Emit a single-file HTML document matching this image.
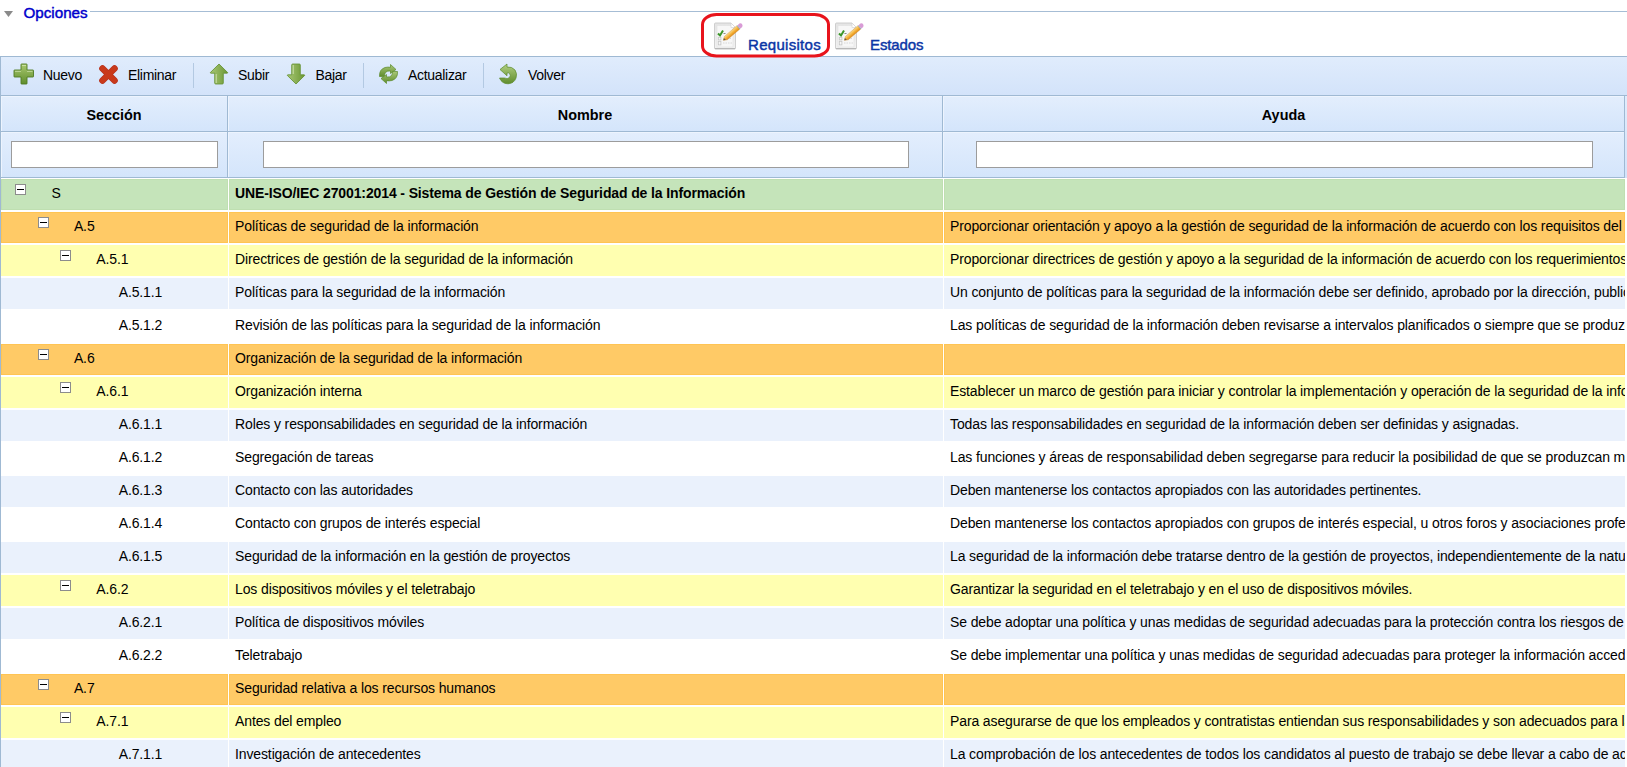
<!DOCTYPE html>
<html><head><meta charset="utf-8">
<style>
*{box-sizing:border-box}
html,body{margin:0;padding:0}
body{width:1627px;height:767px;overflow:hidden;position:relative;background:#fff;font-family:"Liberation Sans",sans-serif;color:#000}
.abs{position:absolute}
#fsline{position:absolute;left:90px;top:11px;width:1537px;height:1px;background:#a6bdd5}
#legend{position:absolute;left:23.5px;top:2px;font-size:15.2px;line-height:22px;color:#0000cc;-webkit-text-stroke:0.45px #0000cc}
.tabtxt{position:absolute;top:35px;font-size:15px;line-height:20px;color:#0a36a6;-webkit-text-stroke:0.45px #0a36a6}
#toolbar{position:absolute;z-index:3;left:0;top:56px;width:1627px;height:40px;border-top:1px solid #9fb9d3;border-bottom:1px solid #9fb9d3;border-left:1px solid #9fb9d3;background:linear-gradient(#e0ecfc,#d3e3fa)}
.tbt{position:absolute;top:9px;font-size:14px;line-height:18px;color:#000;letter-spacing:-0.3px}
.sep{position:absolute;top:6px;width:1px;height:25px;background:#b3c9e2}
.ico{position:absolute}
#hdr{position:absolute;left:0;top:95px;width:1627px;height:84px;background:linear-gradient(#e0ecfc,#d3e3fa)}
.hc{position:absolute;border:1px solid #9fb9d3;background:linear-gradient(#e3eefd,#d4e5fb);box-shadow:inset 1px 1px 0 #edf4fe}
.ht{position:absolute;top:10px;width:100%;text-align:center;font-weight:bold;font-size:14.4px;line-height:18px}
.inp{position:absolute;top:9px;height:27px;background:#fff;border:1px solid #9c9c9c}
.row{position:absolute;left:1px;width:1626px;height:31px}
.c{position:absolute;top:0;height:31px;overflow:hidden;white-space:nowrap}
.c1{left:0;width:227px}
.c2{left:228px;width:714px}
.c3{left:943px;width:681px}
.t{position:absolute;left:6px;top:-1px;font-size:14px;letter-spacing:-0.12px;line-height:31px;white-space:nowrap}
.c1 .t{left:auto}
.bold{font-weight:bold}
.mb{position:absolute;top:5px;width:11px;height:11px;border:1px solid #8c8c8c;background:#fff}
.mb:after{content:"";position:absolute;left:1px;top:4px;width:7px;height:1px;background:#000}
.g{}
.g .c{background:#c5e4ba;box-shadow:inset 0 0 0 1px #bfdfb1}
.o .c{background:#ffca66;box-shadow:inset 0 0 0 1px #ffc453}
.y .c{background:#ffffb0}
.b .c{background:#eaf1fc}
.w .c{background:#fff}
</style></head><body>
<svg class="abs" style="left:0;top:0" width="20" height="22"><path d="M4 11 L13 11 L8.5 17 Z" fill="#8a8a8a"/></svg>
<div id="legend">Opciones</div>
<div id="fsline"></div>


<div id="toolbar">
<svg class="ico" style="left:12px;top:6px" width="22" height="22" viewBox="0 0 22 22">
<defs><linearGradient id="plg" x1="0" y1="0" x2="0" y2="1"><stop offset="0" stop-color="#a9c86f"/><stop offset="1" stop-color="#5f8d2c"/></linearGradient></defs>
<path d="M8 1.5 Q8 1 8.5 1 L13.5 1 Q14 1 14 1.5 L14 7 L20 7 Q20.5 7 20.5 7.5 L20.5 13.5 Q20.5 14 20 14 L14 14 L14 20.5 Q14 21 13.5 21 L8.5 21 Q8 21 8 20.5 L8 14 L1.5 14 Q1 14 1 13.5 L1 7.5 Q1 7 1.5 7 L8 7 Z" fill="url(#plg)" stroke="#4f7a22" stroke-width="0.9"/>
<path d="M9 2.5 L13 2.5 M2 8.3 L8 8.3 M14 8.3 L19.5 8.3" stroke="#d8eab8" stroke-width="0.9" opacity="0.8"/>
</svg>
<div class="tbt" style="left:42px">Nuevo</div>
<svg class="ico" style="left:97px;top:7px" width="21" height="21" viewBox="0 0 21 21">
<defs><linearGradient id="xg" x1="0" y1="0" x2="0" y2="1" gradientUnits="userSpaceOnUse"><stop offset="0" stop-color="#f07b3c"/><stop offset="1" stop-color="#c9391a"/></linearGradient></defs>
<path d="M4.5 4.5 L16.5 16.5 M16.5 4.5 L4.5 16.5" stroke="#b8321c" stroke-width="6.6" stroke-linecap="round"/>
<path d="M4.5 4.5 L16.5 16.5 M16.5 4.5 L4.5 16.5" stroke="url(#xg)" stroke-width="5" stroke-linecap="round"/>
</svg>
<div class="tbt" style="left:127px">Eliminar</div>
<div class="sep" style="left:192px"></div>
<svg class="ico" style="left:208px;top:6px" width="20" height="22" viewBox="0 0 20 22">
<defs><linearGradient id="ug" x1="0" y1="0" x2="1" y2="0"><stop offset="0" stop-color="#a8c776"/><stop offset="1" stop-color="#6c9834"/></linearGradient></defs>
<path d="M10 1 L18.7 9.6 Q18.8 10.2 18 10.2 L14.3 10.2 L14.3 20 Q14.3 21 13.3 21 L6.7 21 Q5.7 21 5.7 20 L5.7 10.2 L2 10.2 Q1.2 10.2 1.3 9.6 Z" fill="url(#ug)" stroke="#628f2e" stroke-width="0.8" stroke-linejoin="round"/>
<path d="M7.2 11 L7.2 20" stroke="#d4e5b4" stroke-width="0.9"/>
</svg>
<div class="tbt" style="left:237px">Subir</div>
<svg class="ico" style="left:285px;top:6px" width="20" height="22" viewBox="0 0 20 22">
<defs><linearGradient id="dng" x1="0" y1="0" x2="1" y2="0"><stop offset="0" stop-color="#a8c776"/><stop offset="1" stop-color="#6c9834"/></linearGradient></defs>
<path d="M10 21 L18.7 12.4 Q18.8 11.8 18 11.8 L14.3 11.8 L14.3 2 Q14.3 1 13.3 1 L6.7 1 Q5.7 1 5.7 2 L5.7 11.8 L2 11.8 Q1.2 11.8 1.3 12.4 Z" fill="url(#dng)" stroke="#628f2e" stroke-width="0.8" stroke-linejoin="round"/>
<path d="M7.2 2 L7.2 11" stroke="#d4e5b4" stroke-width="0.9"/>
</svg>
<div class="tbt" style="left:314.5px">Bajar</div>
<div class="sep" style="left:362px"></div>
<svg class="ico" style="left:377px;top:6px" width="21" height="22" viewBox="0 0 21 22">
<defs><linearGradient id="rg" x1="0" y1="0" x2="0" y2="1"><stop offset="0" stop-color="#a9c878"/><stop offset="1" stop-color="#5f8c2c"/></linearGradient></defs>
<path d="M1.5 13.5 Q1 6.5 7 4.5 Q10 3.8 12.5 4.3 L12.5 1.5 L18 6.5 L12.5 10.5 L12.5 8 Q9 7.5 7.5 9.5 Q6.3 11 6.5 13.5 Z" fill="url(#rg)" stroke="#5a8a2a" stroke-width="0.7" stroke-linejoin="round"/>
<path d="M19.5 8.5 Q20 15.5 14 17.5 Q11 18.2 8.5 17.7 L8.5 20.5 L3 15.5 L8.5 11.5 L8.5 14 Q12 14.5 13.5 12.5 Q14.7 11 14.5 8.5 Z" fill="url(#rg)" stroke="#5a8a2a" stroke-width="0.7" stroke-linejoin="round"/>
</svg>
<div class="tbt" style="left:407px">Actualizar</div>
<div class="sep" style="left:482px"></div>
<svg class="ico" style="left:497px;top:6px" width="20" height="22" viewBox="0 0 20 22">
<defs><linearGradient id="vg" x1="0" y1="0" x2="0" y2="1"><stop offset="0" stop-color="#b2d083"/><stop offset="1" stop-color="#5f8c2c"/></linearGradient></defs>
<path d="M1.5 15 L6.5 15 Q9.5 16.5 11.5 14.5 Q13 12.5 11.5 10.5 Q10.5 9.5 9 10 L9 12.8 L2 6.5 L9 1 L9 4 Q14 3.5 17 7 Q19.5 10.5 18 15 Q16 20.5 10 20.8 Q4 20.8 1.5 15 Z" fill="url(#vg)" stroke="#5a8a2a" stroke-width="0.7" stroke-linejoin="round"/>
</svg>
<div class="tbt" style="left:527px">Volver</div>
</div>
<svg class="ico" style="left:712px;top:20px" width="32" height="32" viewBox="0 0 32 32">
<defs><linearGradient id="dg1" x1="0" y1="0" x2="0" y2="1"><stop offset="0" stop-color="#e4e4e4"/><stop offset="1" stop-color="#f2f2f2"/></linearGradient>
<linearGradient id="pg1" gradientUnits="userSpaceOnUse" x1="12.37" y1="16.48" x2="15.23" y2="19.82"><stop offset="0" stop-color="#fbd98a"/><stop offset="0.5" stop-color="#f5b43c"/><stop offset="1" stop-color="#e08a18"/></linearGradient></defs>
<path d="M2.5 4 Q2.5 3 3.5 3 L19 3 L23.5 7.5 L23.5 28 Q23.5 29 22.5 29 L3.5 29 Q2.5 29 2.5 28 Z" fill="url(#dg1)" stroke="#c9c9c9" stroke-width="0.9"/>
<path d="M3 28.6 L23 28.6" stroke="#b3b3b3" stroke-width="1"/>
<rect x="5" y="5.5" width="16" height="21.5" fill="#f7f7f7" stroke="#e0e0e0" stroke-width="0.6"/>
<path d="M19 3 L19 7.5 L23.5 7.5 Z" fill="#ffffff" stroke="#d0d0d0" stroke-width="0.6"/>
<path d="M6 13.5 L8 15.5 L11 10.5" fill="none" stroke="#3c962a" stroke-width="2"/>
<rect x="6.3" y="17.3" width="2.6" height="2.6" fill="none" stroke="#c4c4c4" stroke-width="0.8"/>
<rect x="6.3" y="21.3" width="2.6" height="3.6" fill="none" stroke="#c4c4c4" stroke-width="0.8"/>
<path d="M11.5 13.5 L13.5 13.5" stroke="#707070" stroke-width="0.8"/>
<path d="M15 18.5 L20 18.5 M11 23 L20 23" stroke="#c8c8c8" stroke-width="0.7" stroke-dasharray="1.5 1"/>
<path d="M11.3 20.3 L12.37 16.48 L24.77 5.83 L27.63 9.17 L15.23 19.82 Z" fill="url(#pg1)" stroke="#c98a2a" stroke-width="0.4"/>
<path d="M11.3 20.3 L11.95 17.9 L13.9 19.9 Z" fill="#6b5a48"/>
<path d="M24.77 5.83 L25.57 5.13 L28.43 8.47 L27.63 9.17 Z" fill="#8fa4b8"/>
<path d="M25.57 5.13 L27.37 3.58 Q28.9 2.6 30 3.9 Q31 5.3 30.23 6.92 L28.43 8.47 Z" fill="#d99bd6"/>
</svg>
<div class="tabtxt" style="left:748px;letter-spacing:0.3px">Requisitos</div>
<svg class="ico" style="left:833px;top:20px" width="32" height="32" viewBox="0 0 32 32">
<defs><linearGradient id="dg2" x1="0" y1="0" x2="0" y2="1"><stop offset="0" stop-color="#e4e4e4"/><stop offset="1" stop-color="#f2f2f2"/></linearGradient>
<linearGradient id="pg2" gradientUnits="userSpaceOnUse" x1="12.37" y1="16.48" x2="15.23" y2="19.82"><stop offset="0" stop-color="#fbd98a"/><stop offset="0.5" stop-color="#f5b43c"/><stop offset="1" stop-color="#e08a18"/></linearGradient></defs>
<path d="M2.5 4 Q2.5 3 3.5 3 L19 3 L23.5 7.5 L23.5 28 Q23.5 29 22.5 29 L3.5 29 Q2.5 29 2.5 28 Z" fill="url(#dg2)" stroke="#c9c9c9" stroke-width="0.9"/>
<path d="M3 28.6 L23 28.6" stroke="#b3b3b3" stroke-width="1"/>
<rect x="5" y="5.5" width="16" height="21.5" fill="#f7f7f7" stroke="#e0e0e0" stroke-width="0.6"/>
<path d="M19 3 L19 7.5 L23.5 7.5 Z" fill="#ffffff" stroke="#d0d0d0" stroke-width="0.6"/>
<path d="M6 13.5 L8 15.5 L11 10.5" fill="none" stroke="#3c962a" stroke-width="2"/>
<rect x="6.3" y="17.3" width="2.6" height="2.6" fill="none" stroke="#c4c4c4" stroke-width="0.8"/>
<rect x="6.3" y="21.3" width="2.6" height="3.6" fill="none" stroke="#c4c4c4" stroke-width="0.8"/>
<path d="M11.5 13.5 L13.5 13.5" stroke="#707070" stroke-width="0.8"/>
<path d="M15 18.5 L20 18.5 M11 23 L20 23" stroke="#c8c8c8" stroke-width="0.7" stroke-dasharray="1.5 1"/>
<path d="M11.3 20.3 L12.37 16.48 L24.77 5.83 L27.63 9.17 L15.23 19.82 Z" fill="url(#pg2)" stroke="#c98a2a" stroke-width="0.4"/>
<path d="M11.3 20.3 L11.95 17.9 L13.9 19.9 Z" fill="#6b5a48"/>
<path d="M24.77 5.83 L25.57 5.13 L28.43 8.47 L27.63 9.17 Z" fill="#8fa4b8"/>
<path d="M25.57 5.13 L27.37 3.58 Q28.9 2.6 30 3.9 Q31 5.3 30.23 6.92 L28.43 8.47 Z" fill="#d99bd6"/>
</svg>
<div class="tabtxt" style="left:870px;letter-spacing:-0.1px">Estados</div>
<div id="hdr">
<div class="hc" style="left:0;top:0;width:228px;height:37px"><div class="ht">Sección</div></div>
<div class="hc" style="left:227px;top:0;width:716px;height:37px"><div class="ht">Nombre</div></div>
<div class="hc" style="left:942px;top:0;width:683px;height:37px"><div class="ht">Ayuda</div></div>
<div class="hc" style="left:0;top:36px;width:228px;height:47px"><div class="inp" style="left:10px;width:207px"></div></div>
<div class="hc" style="left:227px;top:36px;width:716px;height:47px"><div class="inp" style="left:35px;width:646px"></div></div>
<div class="hc" style="left:942px;top:36px;width:683px;height:47px"><div class="inp" style="left:33px;width:617px"></div></div>
<div style="position:absolute;left:0;top:83px;width:1627px;height:1px;background:#fff"></div>
</div>
<svg class="abs" style="left:700px;top:12px;z-index:5" width="131" height="47"><rect x="2.5" y="2.5" width="126" height="41.5" rx="14" ry="10" fill="none" stroke="#e8141c" stroke-width="3"/></svg>
<div class="abs" style="left:0;top:56px;width:1px;height:711px;background:#9fb9d3;z-index:4"></div>
<div class="row g" style="top:179px"><div class="c c1"><div class="mb" style="left:14.0px"></div><span class="t" style="left:50.5px">S</span></div><div class="c c2"><span class="t bold">UNE-ISO/IEC 27001:2014 - Sistema de Gestión de Seguridad de la Información</span></div><div class="c c3"><span class="t"></span></div></div>
<div class="row o" style="top:212px"><div class="c c1"><div class="mb" style="left:36.5px"></div><span class="t" style="left:72.9px">A.5</span></div><div class="c c2"><span class="t">Políticas de seguridad de la información</span></div><div class="c c3"><span class="t">Proporcionar orientación y apoyo a la gestión de seguridad de la información de acuerdo con los requisitos del negocio, las leyes y normativa pertinentes.</span></div></div>
<div class="row y" style="top:245px"><div class="c c1"><div class="mb" style="left:59.0px"></div><span class="t" style="left:95.3px">A.5.1</span></div><div class="c c2"><span class="t">Directrices de gestión de la seguridad de la información</span></div><div class="c c3"><span class="t">Proporcionar directrices de gestión y apoyo a la seguridad de la información de acuerdo con los requerimientos del negocio y la legislación.</span></div></div>
<div class="row b" style="top:278px"><div class="c c1"><span class="t" style="left:117.69999999999999px">A.5.1.1</span></div><div class="c c2"><span class="t">Políticas para la seguridad de la información</span></div><div class="c c3"><span class="t">Un conjunto de políticas para la seguridad de la información debe ser definido, aprobado por la dirección, publicado y comunicado a los empleados.</span></div></div>
<div class="row w" style="top:311px"><div class="c c1"><span class="t" style="left:117.69999999999999px">A.5.1.2</span></div><div class="c c2"><span class="t">Revisión de las políticas para la seguridad de la información</span></div><div class="c c3"><span class="t">Las políticas de seguridad de la información deben revisarse a intervalos planificados o siempre que se produzcan cambios significativos.</span></div></div>
<div class="row o" style="top:344px"><div class="c c1"><div class="mb" style="left:36.5px"></div><span class="t" style="left:72.9px">A.6</span></div><div class="c c2"><span class="t">Organización de la seguridad de la información</span></div><div class="c c3"><span class="t"></span></div></div>
<div class="row y" style="top:377px"><div class="c c1"><div class="mb" style="left:59.0px"></div><span class="t" style="left:95.3px">A.6.1</span></div><div class="c c2"><span class="t">Organización interna</span></div><div class="c c3"><span class="t">Establecer un marco de gestión para iniciar y controlar la implementación y operación de la seguridad de la información dentro de la organización.</span></div></div>
<div class="row b" style="top:410px"><div class="c c1"><span class="t" style="left:117.69999999999999px">A.6.1.1</span></div><div class="c c2"><span class="t">Roles y responsabilidades en seguridad de la información</span></div><div class="c c3"><span class="t">Todas las responsabilidades en seguridad de la información deben ser definidas y asignadas.</span></div></div>
<div class="row w" style="top:443px"><div class="c c1"><span class="t" style="left:117.69999999999999px">A.6.1.2</span></div><div class="c c2"><span class="t">Segregación de tareas</span></div><div class="c c3"><span class="t">Las funciones y áreas de responsabilidad deben segregarse para reducir la posibilidad de que se produzcan modificaciones no autorizadas.</span></div></div>
<div class="row b" style="top:476px"><div class="c c1"><span class="t" style="left:117.69999999999999px">A.6.1.3</span></div><div class="c c2"><span class="t">Contacto con las autoridades</span></div><div class="c c3"><span class="t">Deben mantenerse los contactos apropiados con las autoridades pertinentes.</span></div></div>
<div class="row w" style="top:509px"><div class="c c1"><span class="t" style="left:117.69999999999999px">A.6.1.4</span></div><div class="c c2"><span class="t">Contacto con grupos de interés especial</span></div><div class="c c3"><span class="t">Deben mantenerse los contactos apropiados con grupos de interés especial, u otros foros y asociaciones profesionales especializados.</span></div></div>
<div class="row b" style="top:542px"><div class="c c1"><span class="t" style="left:117.69999999999999px">A.6.1.5</span></div><div class="c c2"><span class="t">Seguridad de la información en la gestión de proyectos</span></div><div class="c c3"><span class="t">La seguridad de la información debe tratarse dentro de la gestión de proyectos, independientemente de la naturaleza del proyecto.</span></div></div>
<div class="row y" style="top:575px"><div class="c c1"><div class="mb" style="left:59.0px"></div><span class="t" style="left:95.3px">A.6.2</span></div><div class="c c2"><span class="t">Los dispositivos móviles y el teletrabajo</span></div><div class="c c3"><span class="t">Garantizar la seguridad en el teletrabajo y en el uso de dispositivos móviles.</span></div></div>
<div class="row b" style="top:608px"><div class="c c1"><span class="t" style="left:117.69999999999999px">A.6.2.1</span></div><div class="c c2"><span class="t">Política de dispositivos móviles</span></div><div class="c c3"><span class="t">Se debe adoptar una política y unas medidas de seguridad adecuadas para la protección contra los riesgos de la utilización de dispositivos.</span></div></div>
<div class="row w" style="top:641px"><div class="c c1"><span class="t" style="left:117.69999999999999px">A.6.2.2</span></div><div class="c c2"><span class="t">Teletrabajo</span></div><div class="c c3"><span class="t">Se debe implementar una política y unas medidas de seguridad adecuadas para proteger la información accedida, tratada o almacenada.</span></div></div>
<div class="row o" style="top:674px"><div class="c c1"><div class="mb" style="left:36.5px"></div><span class="t" style="left:72.9px">A.7</span></div><div class="c c2"><span class="t">Seguridad relativa a los recursos humanos</span></div><div class="c c3"><span class="t"></span></div></div>
<div class="row y" style="top:707px"><div class="c c1"><div class="mb" style="left:59.0px"></div><span class="t" style="left:95.3px">A.7.1</span></div><div class="c c2"><span class="t">Antes del empleo</span></div><div class="c c3"><span class="t">Para asegurarse de que los empleados y contratistas entiendan sus responsabilidades y son adecuados para las funciones para las que se consideran.</span></div></div>
<div class="row b" style="top:740px"><div class="c c1"><span class="t" style="left:117.69999999999999px">A.7.1.1</span></div><div class="c c2"><span class="t">Investigación de antecedentes</span></div><div class="c c3"><span class="t">La comprobación de los antecedentes de todos los candidatos al puesto de trabajo se debe llevar a cabo de acuerdo con las leyes.</span></div></div>
</body></html>
